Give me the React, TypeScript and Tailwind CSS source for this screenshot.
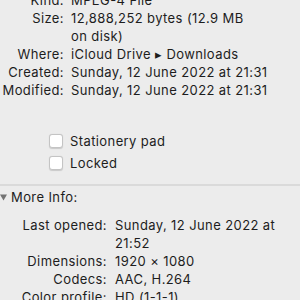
import React from "react";

const TOP_ROWS: [string, React.ReactNode][] = [
  ["Kind:", "MPEG-4 File"],
  [
    "Size:",
    <>
      12,888,252 bytes (12.9 MB
      <br />
      on disk)
    </>,
  ],
  ["Where:", "iCloud Drive ▸ Downloads"],
  ["Created:", "Sunday, 12 June 2022 at 21:31"],
  ["Modified:", "Sunday, 12 June 2022 at 21:31"],
];

const MORE_ROWS: [string, React.ReactNode][] = [
  [
    "Last opened:",
    <>
      Sunday, 12 June 2022 at
      <br />
      21:52
    </>,
  ],
  ["Dimensions:", "1920 × 1080"],
  ["Codecs:", "AAC, H.264"],
  ["Color profile:", "HD (1-1-1)"],
];

function Checkbox({ label }: { label: string }) {
  return (
    <label className="flex items-center gap-[7px] h-[22px]">
      <span className="w-[14px] h-[14px] rounded-[3px] bg-white border border-[#c4c4c4] shadow-[0_0.5px_1px_rgba(0,0,0,0.15)]" />
      <span>{label}</span>
    </label>
  );
}

export default function App() {
  return (
    <div className="w-[300px] h-[300px] overflow-hidden bg-[#ececec] text-[13px] leading-[18px] tracking-[0.4px] text-[#1d1d1d] font-['Inter','Liberation_Sans',sans-serif]">
      <div className="-mt-[9px]">
        <div className="grid grid-cols-[64px_1fr] gap-x-[7px]">
          {TOP_ROWS.map(([k, v]) => (
            <React.Fragment key={k}>
              <div className="text-right whitespace-nowrap">{k}</div>
              <div className="whitespace-nowrap">{v}</div>
            </React.Fragment>
          ))}
        </div>

        <div className="pl-[49px] pt-[31px] pb-[10px] flex flex-col">
          <Checkbox label="Stationery pad" />
          <Checkbox label="Locked" />
        </div>

        <div className="h-[2px] bg-[#dadada]" />

        <div className="flex items-center gap-[4px] h-[22px]">
          <svg width="7" height="7" viewBox="0 0 7 7">
            <path d="M0 0.5 L7 0.5 L3.5 6.5 Z" fill="#737373" />
          </svg>
          <span>More Info:</span>
        </div>

        <div className="grid grid-cols-[107px_1fr] gap-x-[8px] pt-[8px]">
          {MORE_ROWS.map(([k, v]) => (
            <React.Fragment key={k}>
              <div className="text-right whitespace-nowrap">{k}</div>
              <div className="whitespace-nowrap">{v}</div>
            </React.Fragment>
          ))}
        </div>
      </div>
    </div>
  );
}
